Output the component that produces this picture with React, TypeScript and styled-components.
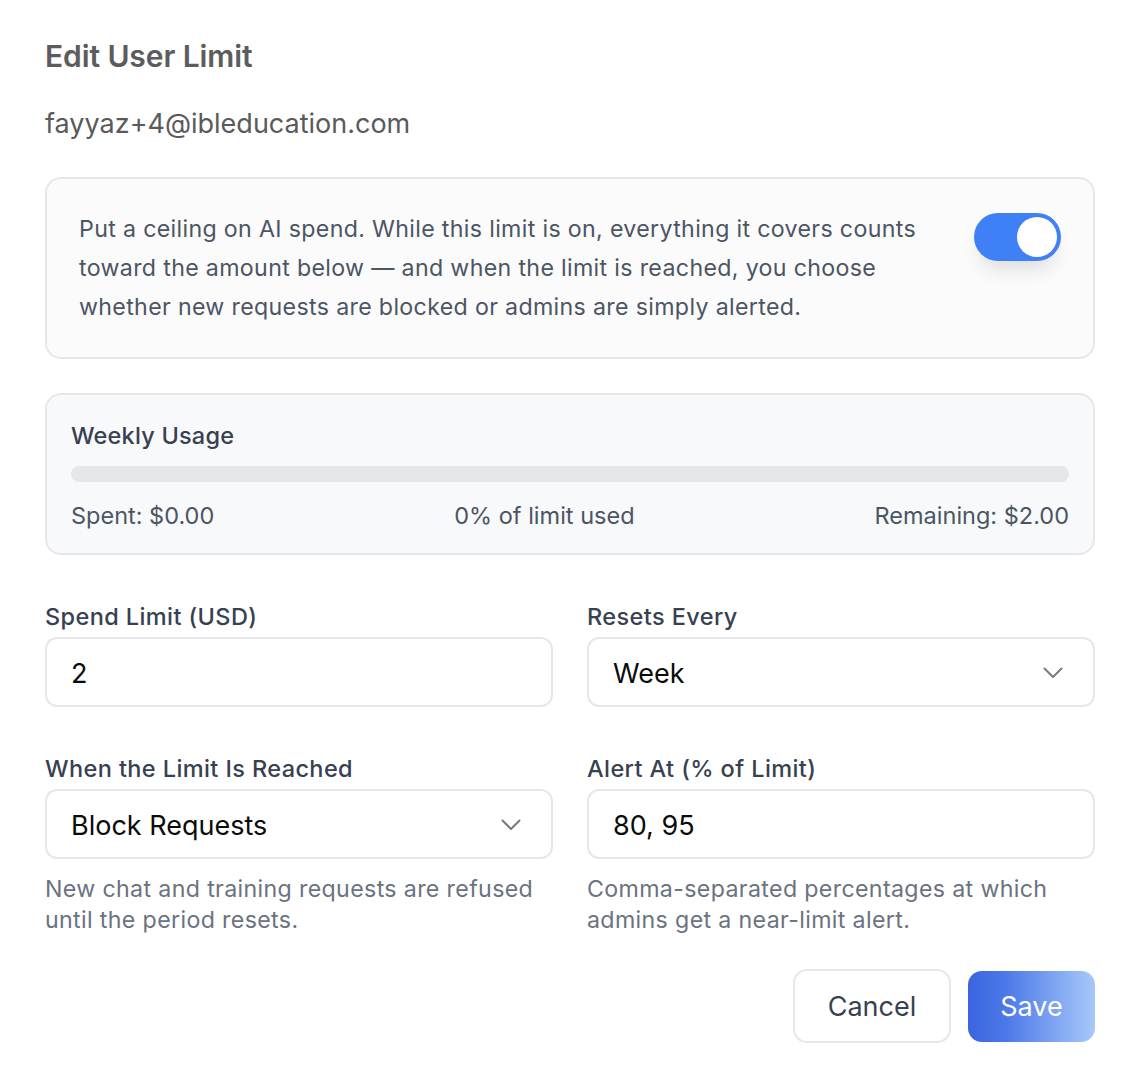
import React, { useState } from "react";
import styled, { createGlobalStyle } from "styled-components";

const Global = createGlobalStyle`
  html, body { margin: 0; padding: 0; background: #ffffff; }
  body { font-family: Inter, "Noto Sans", "Liberation Sans", sans-serif; -webkit-font-smoothing: antialiased; }
  * { box-sizing: border-box; }
`;

const Page = styled.div`
  width: 1142px;
  padding: 38px 47px 40px 45px;
  display: flex;
  flex-direction: column;
`;

const Title = styled.h1`
  margin: 0;
  font-size: 30px;
  line-height: 36px;
  font-weight: 600;
  color: #5c5c5e;
  letter-spacing: -0.1px;
`;

const Email = styled.div`
  margin-top: 33px;
  font-size: 27px;
  line-height: 34px;
  color: #5a5a5c;
  font-weight: 400;
`;

const Card = styled.div<{ $bg: string }>`
  border: 2px solid #e6e7eb;
  border-radius: 16px;
  background: ${(p) => p.$bg};
`;

const ToggleCard = styled(Card)`
  margin-top: 36px;
  padding: 31px 32px 30px 32px;
  display: flex;
  align-items: flex-start;
  justify-content: space-between;
  gap: 40px;
`;

const Intro = styled.p`
  margin: 0;
  max-width: 870px;
  font-size: 23.2px;
  line-height: 39px;
  letter-spacing: 0.33px;
  color: #4b5563;
`;

const Switch = styled.button<{ $on: boolean }>`
  flex: none;
  margin-top: 3px;
  width: 87px;
  height: 48px;
  border-radius: 24px;
  border: none;
  padding: 4px;
  background: ${(p) => (p.$on ? "#4080f7" : "#d1d5db")};
  display: flex;
  justify-content: ${(p) => (p.$on ? "flex-end" : "flex-start")};
  box-shadow: 0 14px 20px -6px rgba(0, 0, 0, 0.12);
  cursor: pointer;
`;

const Knob = styled.span`
  width: 40px;
  height: 40px;
  border-radius: 50%;
  background: #ffffff;
`;

const UsageCard = styled(Card)`
  margin-top: 34px;
  padding: 25px 24px 21px 24px;
  display: flex;
  flex-direction: column;
`;

const UsageTitle = styled.div`
  font-size: 23.5px;
  line-height: 32px;
  font-weight: 500;
  letter-spacing: 0.2px;
  color: #374151;
`;

const Track = styled.div`
  margin-top: 14px;
  height: 16px;
  border-radius: 8px;
  background: #e5e7eb;
  overflow: hidden;
`;

const Fill = styled.div`
  height: 100%;
  background: #4080f7;
`;

const Stats = styled.div`
  margin-top: 18px;
  display: flex;
  justify-content: space-between;
  font-size: 23.5px;
  line-height: 32px;
  color: #4b5563;
`;

const Grid = styled.div`
  margin-top: 46px;
  display: grid;
  grid-template-columns: 1fr 1fr;
  column-gap: 34px;
  row-gap: 46px;
`;

const Field = styled.div`
  display: flex;
  flex-direction: column;
`;

const Label = styled.label`
  font-size: 23.5px;
  line-height: 32px;
  font-weight: 500;
  letter-spacing: 0.4px;
  color: #374151;
  margin-bottom: 4px;
`;

const Box = styled.div`
  height: 70px;
  border: 2px solid #e6e7eb;
  border-radius: 12px;
  background: #ffffff;
  padding: 2px 30px 0 24px;
  display: flex;
  align-items: center;
  justify-content: space-between;
  font-size: 27px;
  color: #0b0b0b;
`;

const Help = styled.div`
  margin-top: 15px;
  font-size: 23.2px;
  line-height: 31px;
  letter-spacing: 0.35px;
  color: #6b7280;
`;

const Actions = styled.div`
  margin-top: 33px;
  display: flex;
  justify-content: flex-end;
  align-items: center;
  gap: 17px;
`;

const Button = styled.button<{ $primary?: boolean }>`
  font-family: inherit;
  font-size: 27px;
  border-radius: 14px;
  cursor: pointer;
  ${(p) =>
    p.$primary
      ? `
    width: 127px;
    height: 71px;
    border: none;
    color: #ffffff;
    background: linear-gradient(90deg, #3b64e0 0%, #4c79e8 30%, #7ea4f1 68%, #a7c9f9 100%);
  `
      : `
    width: 158px;
    height: 74px;
    border: 2px solid #e6e7eb;
    color: #374151;
    background: #ffffff;
  `}
`;

const Chevron = () => (
  <svg width="20" height="12" viewBox="0 0 20 12" fill="none" stroke="#777a7e" strokeWidth="2" strokeLinecap="round" strokeLinejoin="round">
    <path d="M1.5 1.5l8.5 8.5 8.5-8.5" />
  </svg>
);

export default function App() {
  const [on, setOn] = useState(true);
  const spent = 0;
  const limit = 2;
  const pct = Math.round((spent / limit) * 100);
  return (
    <>
      <Global />
      <Page>
        <Title>Edit User Limit</Title>
        <Email>fayyaz+4@ibleducation.com</Email>
        <ToggleCard $bg="#fbfbfc">
          <Intro>
            Put a ceiling on AI spend. While this limit is on, everything it covers counts toward the amount below — and when the limit is reached, you choose whether new requests are blocked or admins are simply alerted.
          </Intro>
          <Switch $on={on} onClick={() => setOn(!on)} aria-label="Toggle limit">
            <Knob />
          </Switch>
        </ToggleCard>
        <UsageCard $bg="#f8f9fb">
          <UsageTitle>Weekly Usage</UsageTitle>
          <Track>
            <Fill style={{ width: `${pct}%` }} />
          </Track>
          <Stats>
            <span>Spent: $0.00</span>
            <span>{pct}% of limit used</span>
            <span>Remaining: $2.00</span>
          </Stats>
        </UsageCard>
        <Grid>
          <Field>
            <Label>Spend Limit (USD)</Label>
            <Box>2</Box>
          </Field>
          <Field>
            <Label>Resets Every</Label>
            <Box>
              Week
              <Chevron />
            </Box>
          </Field>
          <Field>
            <Label>When the Limit Is Reached</Label>
            <Box>
              Block Requests
              <Chevron />
            </Box>
            <Help>New chat and training requests are refused until the period resets.</Help>
          </Field>
          <Field>
            <Label>Alert At (% of Limit)</Label>
            <Box>80, 95</Box>
            <Help>Comma-separated percentages at which admins get a near-limit alert.</Help>
          </Field>
        </Grid>
        <Actions>
          <Button>Cancel</Button>
          <Button $primary>Save</Button>
        </Actions>
      </Page>
    </>
  );
}
